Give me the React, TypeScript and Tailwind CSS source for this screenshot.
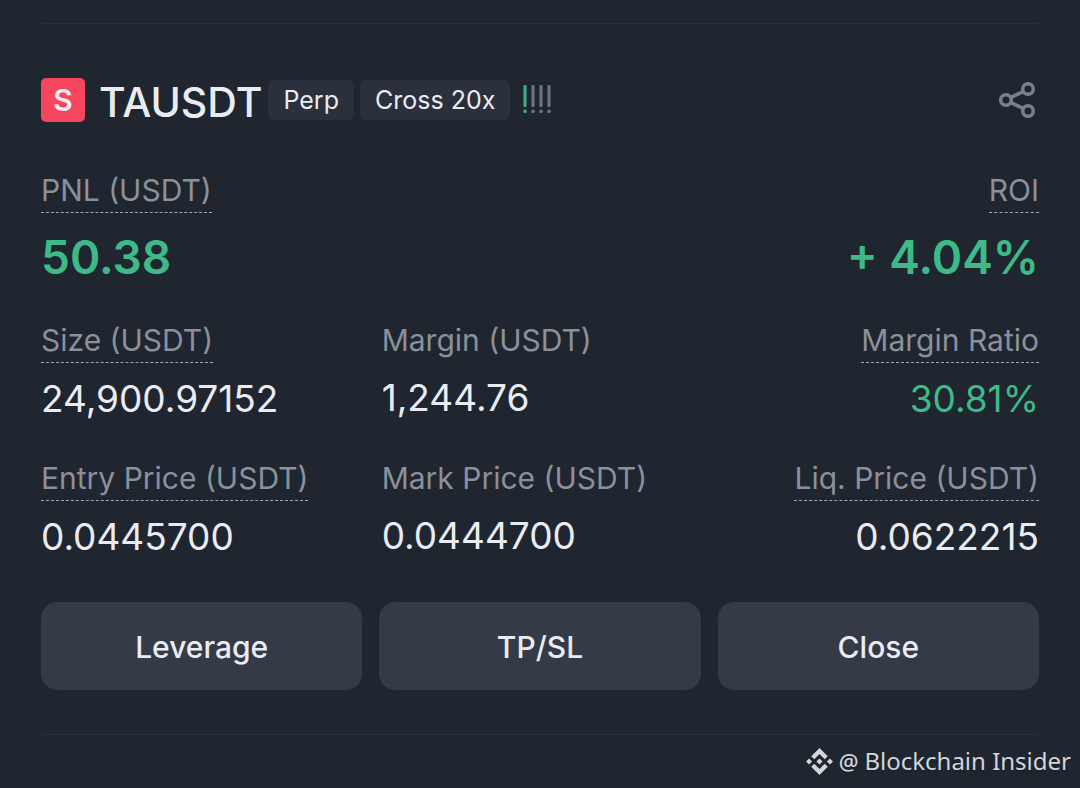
import clsx from "clsx";
import { SiBinance } from "react-icons/si";

type Stat = {
  label: string;
  value: string;
  hint?: boolean;
  tone?: "up";
};

const stats: Stat[] = [
  { label: "Size (USDT)", value: "24,900.97152", hint: true },
  { label: "Margin (USDT)", value: "1,244.76" },
  { label: "Margin Ratio", value: "30.81%", hint: true, tone: "up" },
  { label: "Entry Price (USDT)", value: "0.0445700", hint: true },
  { label: "Mark Price (USDT)", value: "0.0444700" },
  { label: "Liq. Price (USDT)", value: "0.0622215", hint: true },
];

const actions = ["Leverage", "TP/SL", "Close"];

function Label({ children, hint }: { children: string; hint?: boolean }) {
  return (
    <dt
      className={clsx(
        "pb-1 text-[30px] leading-9 whitespace-nowrap text-[#8b909b]",
        hint && "border-b border-dashed border-[#a3a7b0]"
      )}
    >
      {children}
    </dt>
  );
}

function Tag({ children }: { children: string }) {
  return (
    <span className="ml-1.5 rounded-md bg-[#2a303c] px-[15px] pt-px text-[25px] leading-[39px]">
      {children}
    </span>
  );
}

function RiskMeter() {
  return (
    <svg width="30" height="30" viewBox="0 0 30 30" aria-label="Risk level" className="ml-3">
      {[3, 11, 19, 27].map((x, i) => (
        <g key={x} fill={i === 0 ? "#3db287" : "#717680"}>
          <rect x={x - 1.5} y="0" width="3" height="22" rx="1" />
          <rect x={x - 1.7} y="24.6" width="3.4" height="3.4" rx="1.5" />
        </g>
      ))}
    </svg>
  );
}

function ShareIcon() {
  return (
    <svg width="40" height="36" viewBox="0 0 40 36" fill="none" stroke="#7b808a" strokeWidth="3.5">
      <circle cx="7" cy="18" r="5.3" />
      <circle cx="29" cy="7" r="5.3" />
      <circle cx="29" cy="29" r="5.3" />
      <path d="M11.8 15.4 24.2 9.6M11.8 20.6l12.4 5.8" />
    </svg>
  );
}

export default function App() {
  return (
    <main className="min-h-screen bg-[#1f2630] px-[41px] pt-[23px] font-['Inter',sans-serif] text-[#eaecf3]">
      <hr className="mx-0.5 border-[#2a313b]" />

      <header className="mt-[54px] flex h-11 items-center">
        <span className="flex size-11 items-center justify-center rounded-[5px] bg-[#f6465d] text-[30px] font-semibold">
          S
        </span>
        <h1 className="ml-3.5 pt-1 text-[41px] leading-11 font-medium">TAUSDT</h1>
        <Tag>Perp</Tag>
        <Tag>Cross 20x</Tag>
        <RiskMeter />
        <button type="button" aria-label="Share position" className="ml-auto">
          <ShareIcon />
        </button>
      </header>

      <dl className="mt-[50px] flex justify-between">
        <div className="flex flex-col items-start">
          <Label hint>PNL (USDT)</Label>
          <dd className="mt-4 text-[46px] leading-14 font-semibold text-[#3dba88]">50.38</dd>
        </div>
        <div className="flex flex-col items-end">
          <Label hint>ROI</Label>
          <dd className="mt-4 text-[46px] leading-14 font-semibold text-[#3dba88]">+ 4.04%</dd>
        </div>
      </dl>

      <dl className="mt-[37px] grid grid-cols-3 gap-x-6 gap-y-[37px]">
        {stats.map((stat, i) => (
          <div key={stat.label} className={clsx("flex flex-col", i % 3 === 2 ? "items-end" : "items-start")}>
            <Label hint={stat.hint}>{stat.label}</Label>
            <dd className={clsx("mt-3 text-[37px] leading-12", stat.tone === "up" && "text-[#3dba88]")}>
              {stat.value}
            </dd>
          </div>
        ))}
      </dl>

      <div className="mt-[41px] grid grid-cols-3 gap-[17px]">
        {actions.map((action) => (
          <button key={action} type="button" className="h-[88px] rounded-2xl bg-[#343a46] pt-0.5 text-[30px] font-medium">
            {action}
          </button>
        ))}
      </div>

      <hr className="mx-0.5 mt-11 border-[#2a313b]" />

      <footer className="-mr-8 flex items-center justify-end pt-2 font-['Noto_Sans',sans-serif] text-[24px] leading-9 text-[#d3d5d9] text-shadow-sm">
        <SiBinance size={27} className="mr-1.5" />
        <span className="mr-1.5 text-[22px] font-medium">@</span>
        <span>Blockchain Insider</span>
      </footer>
    </main>
  );
}
